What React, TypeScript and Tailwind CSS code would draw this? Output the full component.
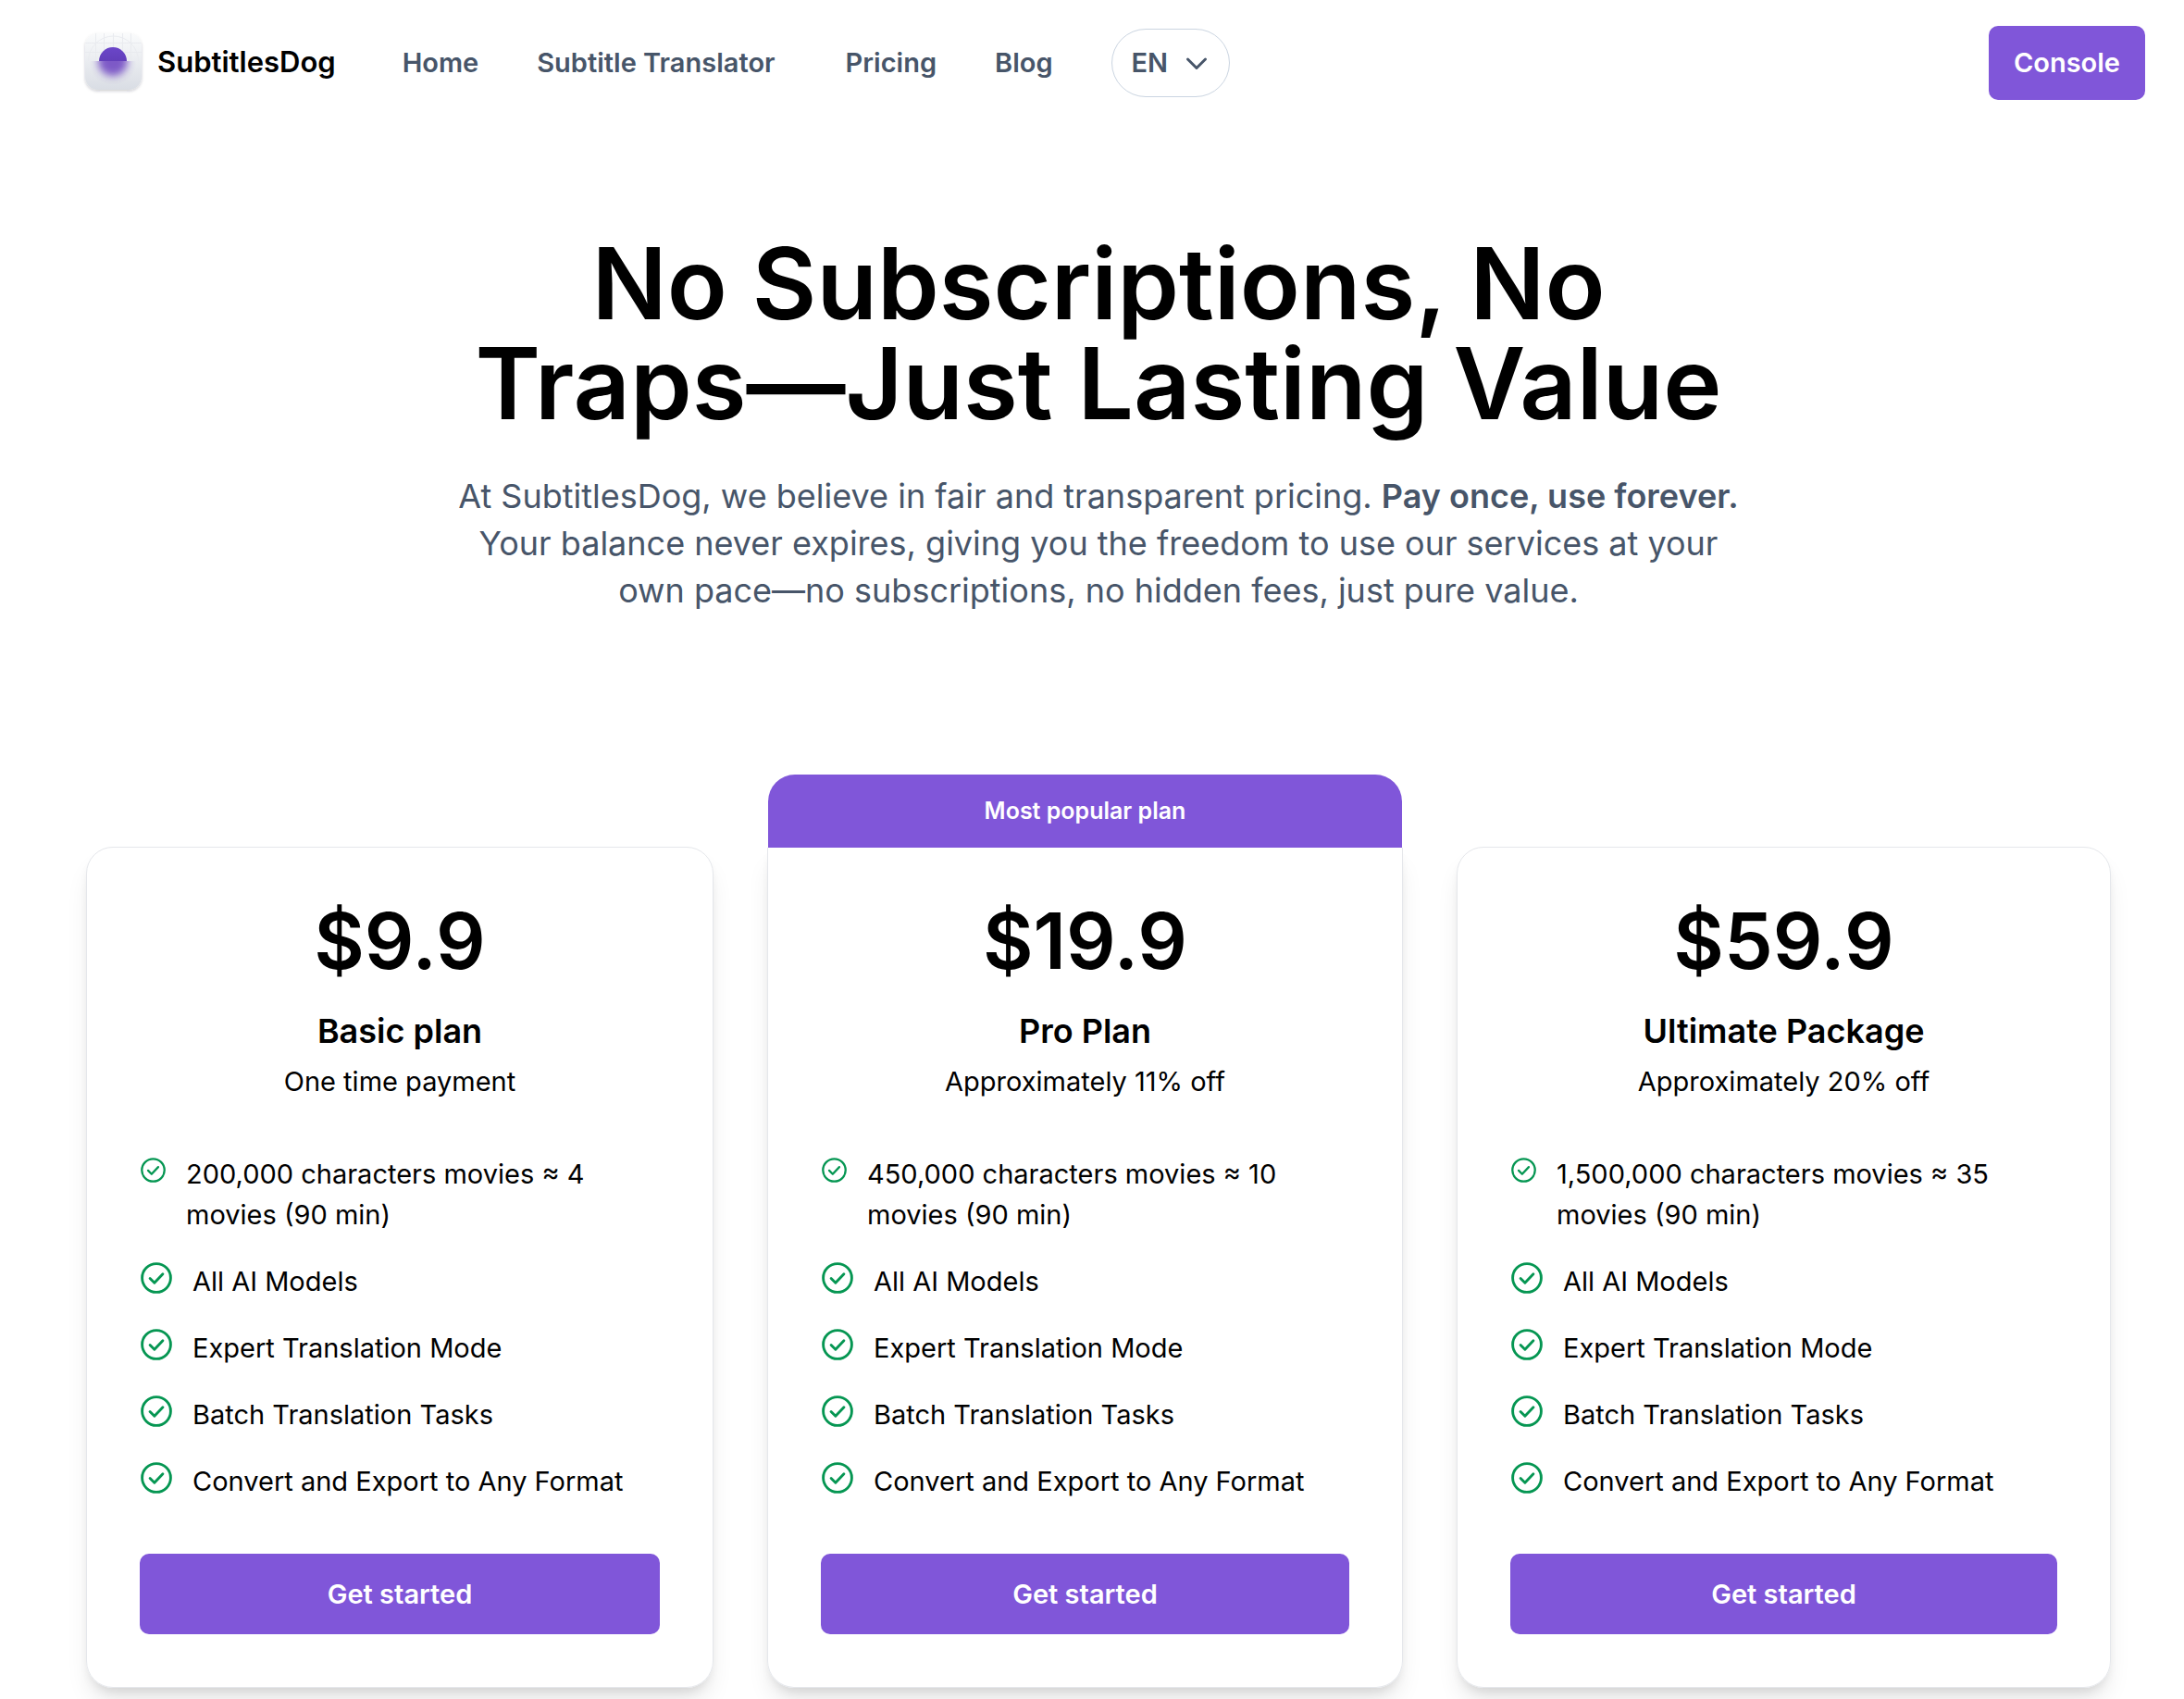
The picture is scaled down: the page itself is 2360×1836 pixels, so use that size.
import React from "react";

const body = "font-['Inter',sans-serif]";

function Logo() {
  return (
    <svg viewBox="0 0 90 86" className="h-[86px] w-[90px]" aria-hidden="true">
      <defs>
        <linearGradient id="tile" x1="0" y1="0" x2="0" y2="1">
          <stop offset="0" stopColor="#fafbfc" />
          <stop offset="1" stopColor="#d9dde4" />
        </linearGradient>
        <linearGradient id="sun" x1="0" y1="0" x2="0" y2="1">
          <stop offset="0" stopColor="#6b46c9" />
          <stop offset="1" stopColor="#5a38ab" />
        </linearGradient>
        <filter id="soft" x="-50%" y="-50%" width="200%" height="200%">
          <feGaussianBlur stdDeviation="4" />
        </filter>
        <filter id="drop" x="-20%" y="-20%" width="140%" height="140%">
          <feDropShadow dx="0" dy="1.5" stdDeviation="1.8" floodColor="#1f2937" floodOpacity="0.22" />
        </filter>
        <clipPath id="tileShape"><rect x="12" y="11" width="61" height="61" rx="14" /></clipPath>
        <clipPath id="upper"><rect x="12" y="11" width="61" height="30" /></clipPath>
        <clipPath id="lower"><rect x="12" y="41" width="61" height="31" /></clipPath>
      </defs>
      <rect x="12" y="11" width="61" height="61" rx="14" fill="url(#tile)" filter="url(#drop)" />
      <g clipPath="url(#tileShape)">
        <g stroke="#e9ebef" strokeWidth="1" fill="none" clipPath="url(#upper)">
          <path d="M12 21.500h61M12 31.500h61M23.500 11v30M32.500 11v30M42.500 11v30M52.500 11v30M61.500 11v30" />
          <circle cx="42.500" cy="41" r="27" />
        </g>
        <circle cx="42" cy="41" r="15" fill="url(#sun)" clipPath="url(#upper)" />
        <g clipPath="url(#lower)">
          <circle cx="42" cy="41" r="16" fill="#6b3fc0" opacity="0.85" filter="url(#soft)" />
        </g>
      </g>
    </svg>
  );
}

function Check({ className }: { className: string }) {
  return (
    <svg viewBox="0 0 32 32" className={className} fill="none" stroke="#059652" strokeWidth="2.7" strokeLinecap="round" strokeLinejoin="round" aria-hidden="true">
      <circle cx="16" cy="16" r="14.500" />
      <path d="M9.500 16.500l4.500 4.500 8.500-9" />
    </svg>
  );
}

type Plan = { price: string; name: string; note: string; volume: string; popular?: boolean };

const plans: Plan[] = [
  { price: "$9.9", name: "Basic plan", note: "One time payment", volume: "200,000 characters movies ≈ 4" },
  { price: "$19.9", name: "Pro Plan", note: "Approximately 11% off", volume: "450,000 characters movies ≈ 10", popular: true },
  { price: "$59.9", name: "Ultimate Package", note: "Approximately 20% off", volume: "1,500,000 characters movies ≈ 35" },
];

const features = ["All AI Models", "Expert Translation Mode", "Batch Translation Tasks", "Convert and Export to Any Format"];

function PlanCard({ plan }: { plan: Plan }) {
  return (
    <article className="flex flex-col">
      {plan.popular ? (
        <p className="mx-px mt-px flex h-[79px] items-center justify-center rounded-t-[29px] bg-[#8056d9] text-[25px] font-semibold text-white">Most popular plan</p>
      ) : (
        <div className="h-[79px]" />
      )}
      <div className={`${plan.popular ? "rounded-b-[29px] border-t-0" : "rounded-[29px]"} border border-[#e5e7eb] shadow-[0_18px_27px_-5px_rgba(0,0,0,0.1),0_7px_11px_-4px_rgba(0,0,0,0.1)]`}>
        <div className="flex flex-col px-[57px] pb-[57px] pt-[57px]">
          <h2 className="text-center text-[84px] font-semibold leading-[88px] text-black">{plan.price}</h2>
          <h3 className="mt-[28px] text-center text-[36px] font-semibold leading-[50px] text-black">{plan.name}</h3>
          <p className="mt-[8px] text-center text-[29px] leading-[44px] text-black">{plan.note}</p>
          <ul className="mt-[56px] flex flex-col gap-7 text-[29px] leading-[44px] text-black">
            <li className="flex gap-[22px]">
              <Check className="mt-[4px] ml-px size-[27px] shrink-0" />
              <span>
                {plan.volume}
                <br />
                movies (90 min)
              </span>
            </li>
            {features.map((f) => (
              <li key={f} className="flex gap-[22px]">
                <Check className="mt-px ml-px size-[34px] shrink-0" />
                <span className="whitespace-nowrap">{f}</span>
              </li>
            ))}
          </ul>
          <button type="button" className="mt-[56px] h-[87px] w-full rounded-[10px] bg-[#8056d9] text-[29px] font-semibold text-white">Get started</button>
        </div>
      </div>
    </article>
  );
}

export default function App() {
  return (
    <div className={`${body} min-h-screen overflow-hidden bg-white`}>
      <header className="flex h-[136px] items-center justify-between pl-[80px] pr-[42px]">
        <nav className="flex items-center text-[29px] font-semibold text-[#475569]">
          <a href="#" className="flex items-center text-[31px] text-black">
            <Logo />
            <span className="pb-[2px]">SubtitlesDog</span>
          </a>
          <a href="#" className="ml-[72px]">Home</a>
          <a href="#" className="ml-[63px]">Subtitle Translator</a>
          <a href="#" className="ml-[76px]">Pricing</a>
          <a href="#" className="ml-[63px]">Blog</a>
          <button type="button" className="ml-[63px] flex h-[74px] w-[128px] items-center justify-between rounded-full border border-[#cbd5e1] px-[21px]">
            EN
            <svg viewBox="0 0 28 28" className="size-[28px]" fill="none" stroke="currentColor" strokeWidth="3" strokeLinecap="round" strokeLinejoin="round" aria-hidden="true">
              <path d="M4.500 10l9.500 9.500 9.500-9.500" />
            </svg>
          </button>
        </nav>
        <button type="button" className="h-[80px] rounded-[10px] bg-[#8056d9] px-[27px] text-[29px] font-semibold text-white">Console</button>
      </header>
      <main>
        <section className="mx-auto flex w-[1500px] max-w-full flex-col items-center pl-[14px] pt-[116px] text-center">
          <h1 className="text-[107px] font-semibold leading-[108px] text-black">
            No Subscriptions, No
            <br />
            Traps—Just Lasting Value
          </h1>
          <p className="mt-[43px] text-[36px] leading-[51px] text-[#475569]">
            At SubtitlesDog, we believe in fair and transparent pricing. <strong className="font-semibold">Pay once, use forever.</strong>
            <br />
            Your balance never expires, giving you the freedom to use our services at your
            <br />
            own pace—no subscriptions, no hidden fees, just pure value.
          </p>
        </section>
        <section className="mt-[172px] grid grid-cols-[678fr_687fr_707fr] gap-[58px] pb-[29px] pl-[93px] pr-[79px]">
          {plans.map((p) => (
            <PlanCard key={p.name} plan={p} />
          ))}
        </section>
      </main>
    </div>
  );
}
